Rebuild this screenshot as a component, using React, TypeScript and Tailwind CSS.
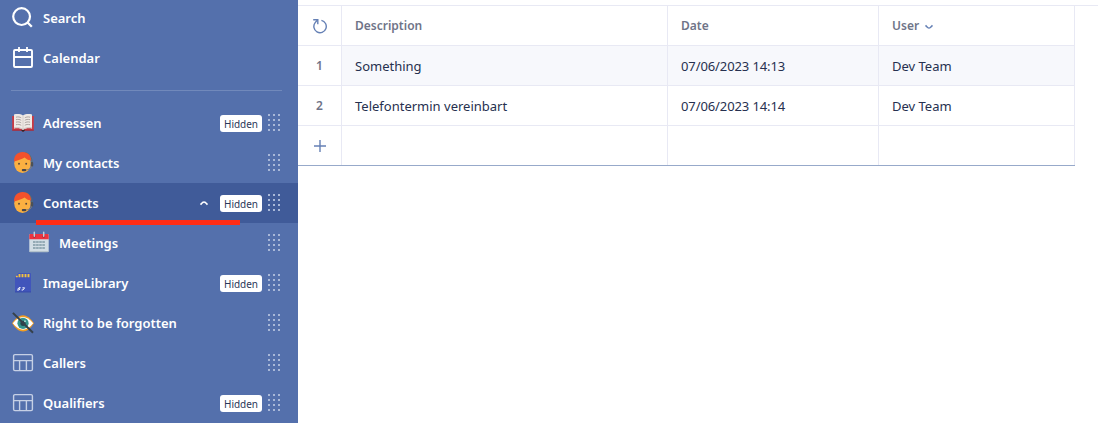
import type { ReactNode } from "react";

function Svg({ children }: { children: ReactNode }) {
  return (
    <svg width="24" height="24" viewBox="0 0 24 24" fill="none" className="shrink-0">
      {children}
    </svg>
  );
}

function SearchIcon() {
  return (
    <Svg>
      <circle cx="10.6" cy="10.6" r="8.4" stroke="#fff" strokeWidth="2.2" />
      <path d="M16.3 16.3 20.8 20.8" stroke="#fff" strokeWidth="2.3" />
    </Svg>
  );
}

function CalendarIcon() {
  return (
    <Svg>
      <rect x="3" y="4" width="18" height="17" rx="1" stroke="#fff" strokeWidth="1.9" />
      <path d="M3 11H21M8 1V6M16 1V6" stroke="#fff" strokeWidth="1.8" />
    </Svg>
  );
}

function BookIcon() {
  return (
    <Svg>
      <path d="M1.2 5H22.8V19.5H14L12 20.5 10 19.5H1.2Z" fill="#c93a44" />
      <path d="M1.2 18.8H22.8V19.6H14L12 20.5 10 19.6H1.2Z" fill="#a51f2b" />
      <path d="M10.6 18.6H13.6V20L12 20.7 10.6 20Z" fill="#302529" />
      <path d="M3 3.6C6 2.7 9.8 3.1 12 4.4 14.2 3.1 18 2.7 21 3.6V17.4C18 16.8 14.2 17 12 18.7 9.8 17 6 16.8 3 17.4Z" fill="#efe9e5" />
      <path d="M3 16.2C6 15.6 10 16 12 17.8 14 16 18 15.6 21 16.2V17.6C18 17 14.2 17.2 12 18.9 9.8 17.2 6 17 3 17.6Z" fill="#d3c8c5" />
      <path d="M12 4.6V18" stroke="#d0c8c5" strokeWidth="0.8" />
      <path d="M5 6.2C7 5.6 9 6 10.2 6.8M5 8.7C7 8.1 9 8.5 10.2 9.3M5 11.2C7 10.6 9 11 10.2 11.8M5 13.7C7 13.1 9 13.5 10.2 14.3M19 6.2C17 5.6 15 6 13.8 6.8M19 8.7C17 8.1 15 8.5 13.8 9.3M19 11.2C17 10.6 15 11 13.8 11.8M19 13.7C17 13.1 15 13.5 13.8 14.3" stroke="#a59c99" strokeWidth="0.9" />
    </Svg>
  );
}

function AgentIcon() {
  return (
    <Svg>
      <path d="M14 1.6C18.6 2.3 21.1 6.4 21.2 12" stroke="#58706e" strokeWidth="1" />
      <ellipse cx="11.5" cy="12.6" rx="8.3" ry="9.3" fill="#fbb041" />
      <path d="M3 10.6C2.9 4.4 6.4 1 11.6 1 17.2 1 20.2 4.6 20.1 10L19.3 9.3C17.2 8.9 15.2 8 13.6 6.4 10.6 8.2 6.6 9.4 3 10.6Z" fill="#f4512c" />
      <circle cx="8" cy="12.8" r="0.95" fill="#594638" />
      <circle cx="15.2" cy="12.8" r="0.95" fill="#594638" />
      <path d="M20.8 15C20.4 17.6 18 18.9 14.5 19" stroke="#8c8170" strokeWidth="1" />
      <rect x="10.8" y="18" width="4.4" height="2.2" rx="1" fill="#46454a" />
      <rect x="19.8" y="11" width="2.4" height="4.4" rx="1" fill="#4c5156" />
    </Svg>
  );
}

function MeetingsIcon() {
  return (
    <Svg>
      <rect x="2.3" y="3" width="19.4" height="18" rx="1" fill="#d2dde4" />
      <path d="M2.3 8.3V4Q2.3 3 3.3 3H20.7Q21.7 3 21.7 4V8.3Z" fill="#ec3340" />
      <path d="M2.3 20.1H21.7V20.4Q21.3 21.2 20.7 21.2H3.3Q2.5 21 2.3 20.4Z" fill="#b3c2cc" />
      <circle cx="7.3" cy="5.4" r="1.4" fill="#b52a38" />
      <circle cx="16.7" cy="5.4" r="1.4" fill="#b52a38" />
      <path d="M7.3 1.2V5.2M16.7 1.2V5.2" stroke="#c2ced8" strokeWidth="1.5" strokeLinecap="round" />
      <path d="M6 11H18M6 14H18M6 17H18" stroke="#94aab4" strokeWidth="1.8" strokeDasharray="2.6 0.5" />
    </Svg>
  );
}

function SdCardIcon() {
  return (
    <Svg>
      <path d="M7.6 2H19.2Q20 2 20 2.8V21.2H4V5.8Z" fill="#4155bb" />
      <path d="M4 20.6H20V21.3H4Z" fill="#3447a4" />
      <path d="M8.5 3V6.3M11.5 3V6.3M14.5 3V6.3M17.5 3V6.3M5.8 4.8V6.3" stroke="#f2c341" strokeWidth="1.9" />
      <path d="M9.6 16.6H8L7 17.8H9L8 19H6M10.6 19H12L13.6 16.8H11.4" stroke="#f1f4fd" strokeWidth="1" />
    </Svg>
  );
}

function EyeIcon() {
  return (
    <Svg>
      <path d="M1 12.2Q6.5 4.2 12 4.2T23 12.2Q17.5 20.6 12 20.6T1 12.2Z" fill="#f59e20" />
      <path d="M1.8 12.3Q7 6 12 6T22.2 12.3Q17 18.8 12 18.8T1.8 12.3Z" fill="#fff" />
      <circle cx="12" cy="12.3" r="5.6" fill="#35948c" />
      <circle cx="12" cy="12.3" r="2.6" fill="#25454d" />
      <circle cx="14" cy="10.3" r="1" fill="#a7d8d1" />
      <path d="M1.9 1.9 22 21.8" stroke="#35414a" strokeWidth="2" />
    </Svg>
  );
}

function TableIcon() {
  return (
    <Svg>
      <rect x="2.6" y="3.6" width="18.8" height="16" rx="1.3" stroke="#c6d0e5" strokeWidth="1.4" />
      <path d="M2.6 9.6H21.4M8.6 9.6V19.6M15.4 9.6V19.6" stroke="#c6d0e5" strokeWidth="1.4" />
    </Svg>
  );
}

function DragHandle() {
  return (
    <svg width="12" height="17" viewBox="0 0 12 17" fill="#a9b8d8" className="mb-px ml-1.5 shrink-0">
      {[0, 5, 10].map((x) =>
        [0, 5, 10, 15].map((y) => <rect key={`${x}-${y}`} x={x} y={y} width="2" height="2" />),
      )}
    </svg>
  );
}

type ItemProps = { icon: ReactNode; label: string; hidden?: boolean; active?: boolean; nested?: boolean; fixed?: boolean };

function NavItem({ icon, label, hidden, active, nested, fixed }: ItemProps) {
  return (
    <div
      className={`relative flex h-10 shrink-0 items-center pr-[18px] ${nested ? "pl-[27px]" : "pl-[11px]"} ${active ? "bg-[#405b99]" : ""}`}
    >
      {icon}
      <span className="ml-2 flex-1 text-[13px] leading-5 font-semibold whitespace-nowrap text-white">{label}</span>
      {active && (
        <svg width="10" height="6" viewBox="0 0 10 6" fill="none" className="mr-[11px]">
          <path d="M1.5 4.6 3.6 2.5Q5 1.4 6.4 2.5L8.5 4.6" stroke="#fff" strokeWidth="1.6" />
        </svg>
      )}
      {hidden && (
        <span className="mt-px flex h-[17px] w-[42px] items-center justify-center rounded-[3px] bg-white text-[10px] leading-none tracking-[-0.05px] text-[#2b3659]">
          Hidden
        </span>
      )}
      {!fixed && <DragHandle />}
      {active && <span className="absolute top-[37px] left-9 z-10 h-[5px] w-51 bg-[#ff2c16]" />}
    </div>
  );
}

const rows = [
  { id: 1, description: "Something", date: "07/06/2023 14:13", user: "Dev Team" },
  { id: 2, description: "Telefontermin vereinbart", date: "07/06/2023 14:14", user: "Dev Team" },
];

const grid = "grid h-10 grid-cols-[44px_326px_211px_196px]";
const cell = "flex items-center border-r border-b border-[#e8e9f4] pl-[13px]";
const firstCell = "flex items-center justify-center border-r border-b border-[#e8e9f4]";

export default function App() {
  return (
    <div className="flex h-[423px] w-[1098px] overflow-hidden bg-white font-['Noto_Sans',sans-serif]">
      <nav className="flex w-[298px] shrink-0 flex-col overflow-hidden bg-[#5470ac]">
        <div className="-mt-0.5 flex flex-col">
          <NavItem icon={<SearchIcon />} label="Search" fixed />
          <NavItem icon={<CalendarIcon />} label="Calendar" fixed />
          <div className="mt-3 mr-4 mb-3 ml-[11px] h-px bg-[#7189bb]" />
          <NavItem icon={<BookIcon />} label="Adressen" hidden />
          <NavItem icon={<AgentIcon />} label="My contacts" />
          <NavItem icon={<AgentIcon />} label="Contacts" hidden active />
          <NavItem icon={<MeetingsIcon />} label="Meetings" nested />
          <NavItem icon={<SdCardIcon />} label="ImageLibrary" hidden />
          <NavItem icon={<EyeIcon />} label="Right to be forgotten" />
          <NavItem icon={<TableIcon />} label="Callers" />
          <NavItem icon={<TableIcon />} label="Qualifiers" hidden />
        </div>
      </nav>
      <main className="flex-1 pt-[5px]">
        <div className="border-t border-[#e8e9f4]">
          <div className="w-[777px] text-[13px] text-[#26304f]">
            <div className={`${grid} text-xs font-semibold text-[#6f7488]`}>
              <div className={firstCell}>
                <svg width="16" height="16" viewBox="0 0 16 16" fill="none" stroke="#6580b5" strokeWidth="1.4">
                  <path d="M9.4 2.4A6.2 6.2 0 1 1 3.2 4.6L5.4 2" />
                  <path d="M1.2 1.7H5.8V6.2" />
                </svg>
              </div>
              <div className={cell}>Description</div>
              <div className={cell}>Date</div>
              <div className={cell}>
                User
                <svg width="10" height="6" viewBox="0 0 10 6" fill="none" className="mt-0.5 ml-[5px]">
                  <path d="M1.5 1.4 3.6 3.5Q5 4.6 6.4 3.5L8.5 1.4" stroke="#6580b5" strokeWidth="1.5" />
                </svg>
              </div>
            </div>
            {rows.map((row) => (
              <div key={row.id} className={grid}>
                <div className={`${firstCell} text-xs font-semibold text-[#6f7488]`}>{row.id}</div>
                <div className={`${cell} pt-0.5 ${row.id === 1 ? "bg-[#f7f8fc]" : ""}`}>{row.description}</div>
                <div className={`${cell} pt-0.5 tracking-[-0.1px] ${row.id === 1 ? "bg-[#f7f8fc]" : ""}`}>{row.date}</div>
                <div className={`${cell} pt-0.5 ${row.id === 1 ? "bg-[#f7f8fc]" : ""}`}>{row.user}</div>
              </div>
            ))}
            <div className="grid h-10 grid-cols-[44px_326px_211px_196px] border-b border-[#97a9ca]">
              <div className="flex items-center justify-center border-r border-[#e8e9f4]">
                <svg width="12" height="12" viewBox="0 0 12 12" className="mt-px">
                  <path d="M6 0V12M0 6H12" stroke="#6580b5" strokeWidth="1.4" />
                </svg>
              </div>
              <div className="border-r border-[#e8e9f4]" />
              <div className="border-r border-[#e8e9f4]" />
              <div className="border-r border-[#e8e9f4]" />
            </div>
          </div>
        </div>
      </main>
    </div>
  );
}
